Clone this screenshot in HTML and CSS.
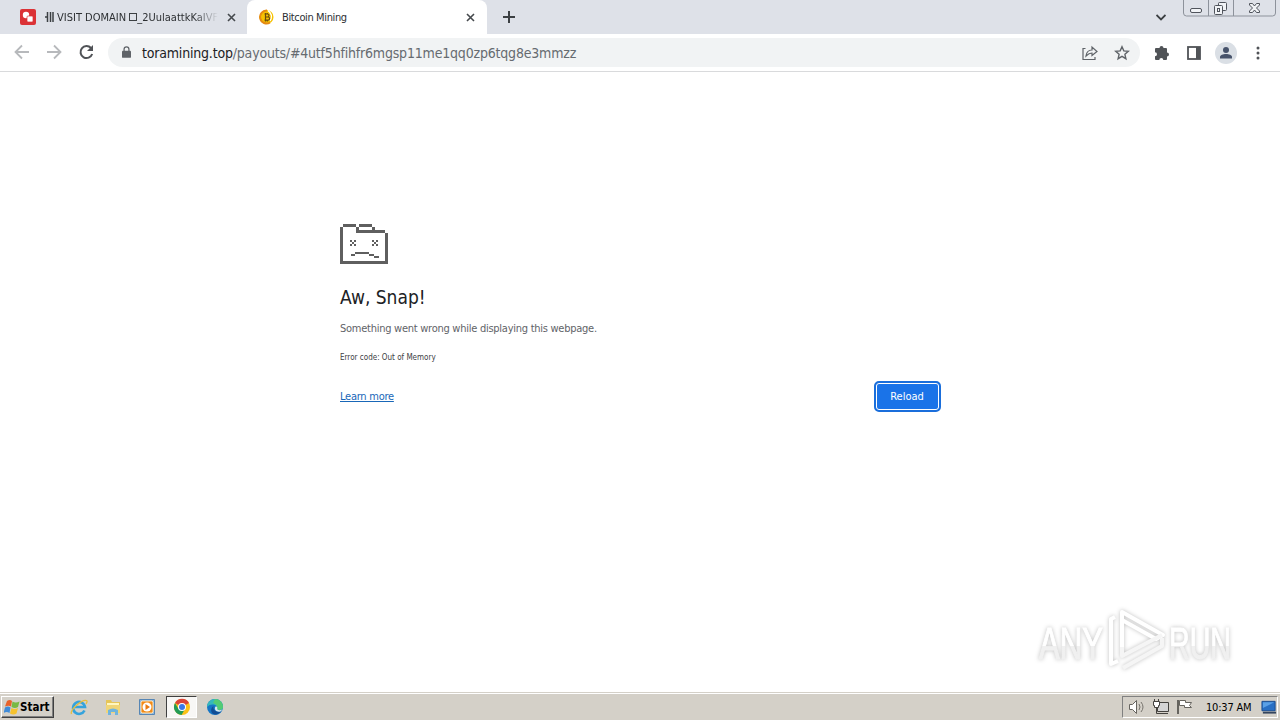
FILE: index.html
```html
<!DOCTYPE html>
<html lang="en">
<head>
    <meta charset="utf-8">
    <title>Bitcoin Mining</title>
    <link rel="stylesheet" href="styles.css">
</head>
<body>
    <div class="tabstrip">
        <div class="tab">
            <svg class="favicon" width="16" height="16" viewBox="0 0 16 16"><rect width="16" height="16" rx="2" fill="#db3236"/><circle cx="6" cy="6" r="3.2" fill="#fff"/><rect x="7" y="7" width="6" height="6" rx="1" fill="#fff" stroke="#db3236" stroke-width=".7"/></svg>
            <svg class="bars" width="9" height="10" viewBox="0 0 9 10"><path d="M0 5h3M2.500 0v10M5.500 0v10M8 0v10" stroke="#3c4043" stroke-width="1.500"/></svg>
            <span class="tab-title faded">VISIT DOMAIN <i class="box"></i>_2UulaattkKaIVF</span>
            <svg class="close" width="9" height="9" viewBox="0 0 9 9"><path d="M1 1l7 7M8 1l-7 7"/></svg>
        </div>
        <div class="tab active">
            <svg class="favicon" width="16" height="16" viewBox="0 0 16 16"><circle cx="7.500" cy="8" r="7" fill="#f7c200"/><path d="M8 1.500a6.500 6.500 0 1 0 3 12" fill="none" stroke="#e58a13" stroke-width="2"/><path d="M9 1.500l2.500 2.500M11 4q3 3 0 8" fill="none" stroke="#fff" stroke-width="1.300"/><path d="M5.500 5h3a1.500 1.500 0 0 1 0 3H6M6.500 8H9a1.500 1.500 0 0 1 0 3.200H5.500M6.500 4v8.500M8.300 4v1M8.300 11v1.500" fill="none" stroke="#6b4c0c" stroke-width="1.200"/></svg>
            <span class="tab-title">Bitcoin Mining</span>
            <svg class="close" width="9" height="9" viewBox="0 0 9 9"><path d="M1 1l7 7M8 1l-7 7"/></svg>
        </div>
        <svg class="new-tab" width="12" height="12" viewBox="0 0 12 12"><path d="M6 0v12M0 6h12" stroke="#3c4043" stroke-width="2"/></svg>
        <svg class="tab-search" width="10" height="7" viewBox="0 0 10 7"><path d="M.5 1L5 5.500 9.500 1" fill="none" stroke="#3c4043" stroke-width="1.800"/></svg>
        <svg class="window-buttons" width="94" height="18" viewBox="0 0 94 18">
            <path d="M.5 0v13a3 3 0 0 0 3 3h86a3 3 0 0 0 3-3V0M25.500 0v16M50.500 0v16" fill="none" stroke="#8d929b"/>
            <g fill="#f1f3f6" stroke="#50545c">
                <rect x="7.500" y="8.500" width="11" height="4" rx="1.500"/>
                <rect x="35.500" y="2.500" width="8" height="8" rx="1"/>
                <rect x="31.500" y="5.500" width="8" height="9" rx="1"/>
                <rect x="34.500" y="8.500" width="2" height="3"/>
                <path d="M66.500 3.500h3l2 2.500 2-2.500h3v1.500l-3 3 3 3v1.500h-3l-2-2.500-2 2.500h-3V11l3-3-3-3z"/>
            </g>
        </svg>
    </div>

    <div class="toolbar">
        <svg class="nav-icons" width="108" height="38" viewBox="0 0 108 38" fill="none">
            <path d="M29 18H16M22 11.500L15.500 18l6.500 6.500M47 18h13M54 11.500l6.500 6.500-6.500 6.500" stroke="#b7b9bc" stroke-width="1.800"/>
            <path d="M91 14a6 6 0 1 0 1.200 6" stroke="#505357" stroke-width="2"/>
            <path d="M93 11v6h-6z" fill="#505357"/>
        </svg>
        <div class="omnibox">
            <svg class="lock" width="9" height="12" viewBox="0 0 10 13"><rect y="5" width="10" height="8" rx="1" fill="#5f6368"/><path d="M2.300 6V3.500a2.700 2.700 0 0 1 5.400 0V6" fill="none" stroke="#5f6368" stroke-width="1.400"/></svg>
            <span class="url"><b>toramining.top</b>/payouts/#4utf5hfihfr6mgsp11me1qq0zp6tqg8e3mmzz</span>
            <svg class="share" width="16" height="16" viewBox="0 0 16 16" fill="none" stroke="#5f6368" stroke-width="1.200"><path d="M3.500 3.500H1v11h12V12"/><path d="M4 11c.5-4 2.500-6 6-6V2l5 4.500-5 4V8C7.500 8 6 9 4 11z"/></svg>
            <svg class="star" width="16" height="16" viewBox="0 0 16 16" fill="none" stroke="#5f6368" stroke-width="1.400"><path d="M8 1.800l1.800 4.100 4.500.4-3.400 3 1 4.400L8 11.400l-3.900 2.300 1-4.400-3.400-3 4.500-.4z"/></svg>
        </div>
        <svg class="puzzle" width="16" height="16" viewBox="0 0 16 16"><path d="M1 4a1 1 0 0 1 1-1h3.500a2 2 0 1 1 4 0H12a1 1 0 0 1 1 1v3.500a2 2 0 1 1 0 4V14a1 1 0 0 1-1 1H9.300a2 2 0 0 0-4 0H2a1 1 0 0 1-1-1v-2.700a2 2 0 0 0 0-4z" fill="#505357"/></svg>
        <svg class="panel" width="14" height="14" viewBox="0 0 14 14"><rect x="1" y="1" width="12" height="12" fill="none" stroke="#505357" stroke-width="1.800"/><path d="M9 1h4v12H9z" fill="#505357"/></svg>
        <svg class="avatar" width="22" height="22" viewBox="0 0 22 22"><circle cx="11" cy="11" r="11" fill="#dadfe5"/><circle cx="11" cy="8" r="3" fill="#47536b"/><path d="M5 16.500v-1.500c0-4 12-4 12 0v1.500z" fill="#47536b"/></svg>
        <svg class="dots" width="4" height="14" viewBox="0 0 4 14" fill="#505357"><circle cx="2" cy="2" r="1.500"/><circle cx="2" cy="7" r="1.500"/><circle cx="2" cy="12" r="1.500"/></svg>
    </div>

    <div class="page">
        <div class="error">
            <svg class="sad-tab" width="48" height="40" viewBox="0 0 48 40" fill="#5f5f5f" shape-rendering="crispEdges">
                <path d="M3 0h13v3H3zM0 3h3v37H0zM3 37h42v3H3zM45 9h3v31h-3zM16 3h3v6h-3zM19 0h13v3H19zM32 3h3v3h-3zM19 6h26v3H19z"/>
                <path d="M10 16h2v2h-2zM14 16h2v2h-2zM12 18h2v2h-2zM10 20h2v2h-2zM14 20h2v2h-2zM32 16h2v2h-2zM36 16h2v2h-2zM34 18h2v2h-2zM32 20h2v2h-2zM36 20h2v2h-2z"/>
                <path d="M11 30h4v2h-4zM15 28h14v2H15zM29 30h5v2h-5zM34 32h5v2h-5z"/>
            </svg>
            <h1>Aw, Snap!</h1>
            <p class="message">Something went wrong while displaying this webpage.</p>
            <p class="code">Error code: Out of Memory</p>
            <div class="actions">
                <a class="learn" href="#">Learn more</a>
                <button class="reload">Reload</button>
            </div>
        </div>
        <svg class="watermark" width="220" height="80" viewBox="0 0 220 80">
            <defs>
                <linearGradient id="shine" x1="0" y1="0" x2="0" y2="1">
                    <stop offset=".55" stop-color="#fff"/>
                    <stop offset=".55" stop-color="#f0f0f0"/>
                </linearGradient>
            </defs>
            <g class="mark-text">
                <text x="8" y="52" textLength="64" lengthAdjust="spacingAndGlyphs">ANY</text>
                <text x="138" y="52" textLength="62" lengthAdjust="spacingAndGlyphs">RUN</text>
            </g>
            <g class="mark-logo">
                <path d="M91 40V5l41 23-7 4-34-19"/>
                <path d="M84 10l-4 2v45l7-3"/>
                <path d="M91 40v9l40-21M92 61l39-22v-8" stroke="#f5f5f5"/>
            </g>
        </svg>
    </div>

    <div class="taskbar">
        <div class="start">
            <svg width="16" height="16" viewBox="0 0 16 16"><path d="M3 2q3-2 5 0L7 7.500Q5 6 1 7.500z" fill="#e8622a"/><path d="M8.500 2.500q3 2 7 0L14 8q-3 2-6.500 0z" fill="#78b943"/><path d="M1 8.500q3-2 5.500 0l-1 5.500q-3-2-6 0z" fill="#3f8bd8"/><path d="M7.500 9q3 2 6.500 0l-1.500 5.500q-3 2-6.500 0z" fill="#f6c22d"/></svg>
            <span>Start</span>
        </div>
        <div class="launch">
            <svg width="18" height="18" viewBox="0 0 18 18" fill="none"><path d="M14.500 12.500A6 6 0 1 1 15 9H5" stroke="#35a3dc" stroke-width="2.600"/><path d="M1.500 16C-.5 12 12 1 16.500 2.500c1 .5.500 2-.5 3.500" stroke="#e8be3c" stroke-width="1.300"/></svg>
        </div>
        <div class="launch">
            <svg width="18" height="18" viewBox="0 0 18 18"><path d="M2 2h5l1 2h8v10H2z" fill="#e6c558"/><path d="M3 5h12v5H3z" fill="#fff6bf"/><path d="M2 7h14v8H2z" fill="#f0d577"/><path d="M4 17v-5q5-3 10 0v5h-3v-3H7v3z" fill="#6fb4dd"/></svg>
        </div>
        <div class="launch">
            <svg width="18" height="18" viewBox="0 0 18 18"><path d="M1.500 1.500h15v15h-15z" fill="#8fb9df" stroke="#5686b5"/><path d="M4 3h10l1 1v10l-1 1H4l-1-1V4z" fill="#f28a16" stroke="#fbe2b8"/><circle cx="9" cy="9" r="4.500" fill="#fff"/><path d="M7.500 6l4.500 3-4.500 3z" fill="#e87910"/></svg>
        </div>
        <div class="launch pressed">
            <svg width="18" height="18" viewBox="0 0 18 18"><circle cx="9" cy="9" r="8" fill="#fbc116"/><path d="M9 9L2 5a8 8 0 0 1 14 0z" fill="#dc4437"/><path d="M9 9L5.500 11 2 5a8 8 0 0 0 6.500 12L12 11z" fill="#239b56"/><circle cx="9" cy="9" r="4" fill="#fff"/><circle cx="9" cy="9" r="3" fill="#3b78e7"/></svg>
        </div>
        <div class="launch">
            <svg width="18" height="18" viewBox="0 0 18 18"><circle cx="9" cy="9" r="8" fill="#1676c5"/><path d="M1 9a8 8 0 0 1 16 0c0 3-4 4-6 2 2-4-6-7-10-2z" fill="#35b9bb"/><path d="M9 1a8 8 0 0 1 8 8c0 3-4 4-6 2 1-3-1-5-4-6z" fill="#53cb74"/><path d="M7.500 8c-1 4 3 7 8 5a8 8 0 0 1-5 3.500C4 17 4 10 7.500 8z" fill="#124d94"/><path d="M9.500 8.500c3 0 1 2 2 3s3 1 5 0l-2 2c-4 1-7-2-5-5z" fill="#d9e9ed"/></svg>
        </div>
        <div class="tray">
            <svg width="72" height="18" viewBox="0 0 72 18" fill="none">
                <path d="M1.500 6.500h3l4-4v13l-4-4h-3z" fill="#fff" stroke="#66645f"/>
                <path d="M11 6q2 3 0 6M13 4q4 5 0 10" stroke="#77746e"/>
                <path d="M29.500 4.500h11v9h-11z" fill="#d5d5d5" stroke="#44423e"/>
                <path d="M31 15.500h9M28.500 9v6.500h3M26.500 1v3M30.500 1v3" stroke="#44423e"/>
                <path d="M25.500 3.500h6v4h-1v2h-4v-2h-1z" fill="#fff" stroke="#44423e"/>
                <path d="M50 2v14" stroke="#66645f" stroke-width="2"/>
                <path d="M51.500 2.500h6v2h6l-2 3 2 2h-7v-2h-5z" fill="#fff" stroke="#66645f"/>
            </svg>
            <span class="clock">10:37 AM</span>
            <svg width="16" height="16" viewBox="0 0 17 16"><path d="M1 2h14v10H1z" fill="#286fc4" stroke="#174a8d"/><path d="M2 3h12L2 9z" fill="#5aa0e6"/><path d="M2 13h14v2H2z" fill="#34455e"/></svg>
        </div>
    </div>
</body>
</html>
```
FILE: styles.css
```css
* {
    box-sizing: border-box;
}

body {
    margin: 0;
    width: 1280px;
    height: 720px;
    display: flex;
    flex-direction: column;
    overflow: hidden;
    background: #fff;
    font-family: "DejaVu Sans Condensed", "DejaVu Sans", sans-serif;
    font-stretch: condensed;
    font-size: 11px;
    color: #3c4043;
}

svg {
    display: block;
    flex: none;
}

.tabstrip {
    display: flex;
    height: 34px;
    background: #dee1e8;
}

.tab {
    display: flex;
    align-items: center;
    width: 247px;
    padding: 0 11px 0 20px;
}

.tab.active {
    width: 240px;
    padding: 0 12px 0 12px;
    background: #fff;
    border-radius: 8px 8px 0 0;
}

.tab-title {
    flex: 1;
    margin-left: 7px;
    overflow: hidden;
    white-space: nowrap;
    font-size: 11px;
    letter-spacing: -0.37px;
    color: #2d3033;
}

.tab-title.faded {
    margin: 0 9px 0 3px;
    letter-spacing: 0;
    -webkit-mask-image: linear-gradient(to right, #000 85%, transparent);
    mask-image: linear-gradient(to right, #000 85%, transparent);
}

.box {
    display: inline-block;
    width: 8px;
    height: 8px;
    border: 1px solid #3c4043;
}

.bars {
    margin-left: 9px;
}

.close {
    fill: none;
    stroke: #45494d;
    stroke-width: 1.6;
}

.new-tab {
    margin: 11px 0 0 16px;
}

.tab-search {
    margin: 14px 17px 0 auto;
}

.window-buttons {
    margin-right: 3px;
}

.toolbar {
    display: flex;
    align-items: center;
    height: 38px;
    border-bottom: 1px solid #d9dadc;
}

.omnibox {
    display: flex;
    align-items: center;
    width: 1032px;
    height: 29px;
    padding: 0 10px 0 14px;
    border-radius: 15px;
    background: #f1f3f4;
}

.lock {
    margin-bottom: 2px;
}

.url {
    margin-left: 11px;
    font-size: 14px;
    letter-spacing: -0.19px;
    color: #666b70;
}

.url b {
    font-weight: normal;
    color: #202124;
}

.share {
    margin-left: auto;
}

.star {
    margin-left: 16px;
}

.puzzle {
    margin-left: 14px;
}

.panel {
    margin-left: 17px;
}

.avatar {
    margin-left: 14px;
}

.dots {
    margin-left: 19px;
}

.page {
    position: relative;
    flex: 1;
}

.error {
    width: 601px;
    margin: 152px 0 0 340px;
}

h1 {
    margin: 20px 0 0;
    font-size: 19px;
    font-weight: normal;
    line-height: 26px;
    color: #202124;
}

p {
    margin: 0;
    white-space: nowrap;
}

.message {
    margin-top: 11px;
    line-height: 16px;
    letter-spacing: -0.26px;
    color: #5f6368;
}

.code {
    margin-top: 14px;
    font-size: 8px;
    line-height: 14px;
}

.actions {
    display: flex;
    justify-content: space-between;
    align-items: center;
    margin-top: 16px;
}

.learn {
    letter-spacing: -0.25px;
    color: #1967b8;
}

.reload {
    width: 67px;
    height: 31px;
    padding: 0 1px 0 0;
    border: 2px solid #1a6edb;
    border-radius: 5px;
    box-shadow: inset 0 0 0 1px #fff;
    background: #1a73e8;
    color: #fff;
    font: inherit;
}

.watermark {
    position: absolute;
    left: 1031px;
    top: 535px;
    overflow: visible;
    filter: drop-shadow(0 0 2px rgba(0, 0, 0, 0.25));
}

.mark-text {
    font: 44px "Liberation Sans", Arial, sans-serif;
    fill: url(#shine);
    stroke: url(#shine);
}

.mark-logo {
    fill: none;
    stroke: #fff;
    stroke-width: 4;
    stroke-linejoin: round;
}

.taskbar {
    display: flex;
    align-items: center;
    height: 28px;
    padding: 1px 2px 0 1px;
    border-top: 1px solid #d4d0c8;
    background: #d4d0c8;
    box-shadow: inset 0 1px 0 #fff;
}

.start {
    display: flex;
    align-items: center;
    width: 53px;
    height: 22px;
    margin-right: 10px;
    padding-left: 2px;
    border: 1px solid;
    border-color: #fff #404040 #404040 #fff;
    box-shadow: inset -1px -1px 0 #808080;
    font-size: 11.5px;
    font-weight: bold;
    color: #000;
}

.launch {
    display: flex;
    justify-content: center;
    align-items: center;
    width: 30px;
    height: 22px;
    margin-right: 4px;
}

.pressed {
    width: 31px;
    margin-right: 3px;
    border: 1px solid;
    border-color: #404040 #fff #fff #404040;
    background: #f8f7f5;
}

.tray {
    display: flex;
    align-items: center;
    width: 156px;
    height: 22px;
    margin-left: auto;
    padding-left: 5px;
    border: 1px solid;
    border-color: #808080 #fff #fff #808080;
    color: #000;
}

.clock {
    width: 50px;
    margin: 0 5px 0 6px;
    white-space: nowrap;
    letter-spacing: -0.2px;
}
```
